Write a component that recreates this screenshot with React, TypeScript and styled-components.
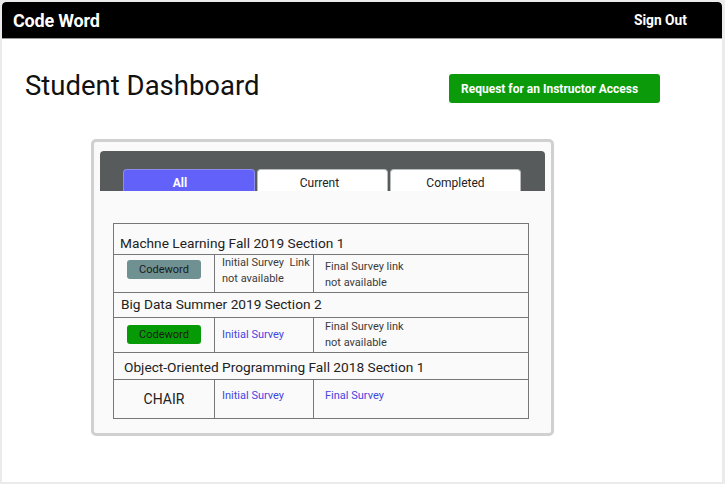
import React from "react";
import styled, { createGlobalStyle } from "styled-components";

const Global = createGlobalStyle`
  html, body { margin: 0; padding: 0; background: #ebebeb; }
  body { font-family: Roboto, "Liberation Sans", Arial, sans-serif; }
  * { box-sizing: border-box; }
`;

const Frame = styled.div`
  width: 725px;
  height: 484px;
  padding: 2px 3px 2px 2px;
  background: #ebebeb;
`;

const Page = styled.div`
  height: 100%;
  background: #ffffff;
  border-radius: 4px 4px 0 0;
  display: flex;
  flex-direction: column;
  overflow: hidden;
`;

const TopBar = styled.header`
  height: 37px;
  background: #000;
  border-radius: 4px 4px 0 0;
  border-bottom: 1px solid #9a9a9a;
  display: flex;
  align-items: center;
  justify-content: space-between;
  padding: 0 35px 0 11px;
  color: #fff;
`;

const Brand = styled.div`
  font-size: 18px;
  font-weight: 700;
  letter-spacing: -0.2px;
`;

const SignOut = styled.div`
  font-size: 13.8px;
  font-weight: 700;
`;

const TitleRow = styled.div`
  display: flex;
  align-items: flex-start;
  margin-top: 31px;
  padding: 0 62px 0 23px;
`;

const Title = styled.h1`
  margin: 0;
  font-size: 27.5px;
  line-height: 32px;
  font-weight: 400;
  color: #111;
`;

const AccessButton = styled.button`
  margin-left: auto;
  margin-top: 4px;
  width: 211px;
  height: 29px;
  border: none;
  border-radius: 3px;
  background: #0a9a0a;
  color: #fff;
  font-family: inherit;
  font-size: 12px;
  font-weight: 700;
  text-align: left;
  padding: 0 0 0 12px;
`;

const Card = styled.section`
  margin: 36px 0 0 89px;
  width: 463px;
  height: 297px;
  border: 3px solid #d0d0d0;
  border-radius: 5px;
  background: #fafafa;
  padding: 9px 6px 0 6px;
`;

const TabBar = styled.div`
  height: 40px;
  background: #575b5b;
  border-radius: 4px 4px 0 0;
  display: flex;
  align-items: flex-end;
  gap: 2px;
  padding-left: 23px;
`;

const Tab = styled.div<{ $active?: boolean; $pr: number }>`
  width: 131px;
  height: 22px;
  border: 1px solid ${(p) => (p.$active ? "#8c8cf0" : "#b8bcbc")};
  border-bottom: none;
  border-radius: 4px 4px 0 0;
  background: ${(p) => (p.$active ? "#6262fa" : "#ffffff")};
  color: ${(p) => (p.$active ? "#ffffff" : "#222")};
  font-size: 12px;
  font-weight: ${(p) => (p.$active ? 700 : 400)};
  display: flex;
  align-items: center;
  justify-content: center;
  padding: 4px ${(p) => p.$pr}px 0 0;
  &:first-child { width: 132px; }
`;

const Table = styled.div`
  margin: 32px 0 0 13px;
  width: 416px;
  border-top: 1px solid #777;
  border-left: 1px solid #777;
  border-right: 1px solid #777;
`;

const CourseTitle = styled.div<{ $h: number; $pl: number; $pt: number }>`
  height: ${(p) => p.$h}px;
  padding: ${(p) => p.$pt}px 0 0 ${(p) => p.$pl}px;
  border-bottom: 1px solid #777;
  font-size: 13.7px;
  color: #222;
  line-height: 16px;
  white-space: nowrap;
`;

const DataRow = styled.div<{ $h: number }>`
  height: ${(p) => p.$h}px;
  display: grid;
  grid-template-columns: 101px 99px 1fr;
  border-bottom: 1px solid #777;
`;

const Cell = styled.div<{ $pt?: number; $pl?: number; $center?: boolean; $middle?: boolean }>`
  border-right: 1px solid #777;
  &:last-child { border-right: none; }
  padding: ${(p) => p.$pt ?? 0}px 0 0 ${(p) => p.$pl ?? 0}px;
  display: flex;
  flex-direction: column;
  align-items: ${(p) => (p.$center ? "center" : "flex-start")};
  justify-content: ${(p) => (p.$middle ? "center" : "flex-start")};
  font-size: 11px;
  line-height: 16px;
  color: #3a3a3a;
`;

const CodeButton = styled.div<{ $bg: string }>`
  width: 74px;
  height: 19px;
  border-radius: 3px;
  background: ${(p) => p.$bg};
  color: #1a1a1a;
  font-size: 11px;
  display: flex;
  align-items: center;
  justify-content: center;
`;

const SurveyLink = styled.a`
  color: #4545e2;
  font-size: 11px;
  text-decoration: none;
`;

const ChairText = styled.div`
  font-size: 14px;
  color: #222;
`;

export default function App() {
  return (
    <>
      <Global />
      <Frame>
        <Page>
          <TopBar>
            <Brand>Code Word</Brand>
            <SignOut>Sign Out</SignOut>
          </TopBar>
          <TitleRow>
            <Title>Student Dashboard</Title>
            <AccessButton>Request for an Instructor Access</AccessButton>
          </TitleRow>
          <Card>
            <TabBar>
              <Tab $active $pr={18}>All</Tab>
              <Tab $pr={6}>Current</Tab>
              <Tab $pr={0}>Completed</Tab>
            </TabBar>
            <Table>
              <CourseTitle $h={31} $pl={6} $pt={11}>
                Machne Learning Fall 2019 Section 1
              </CourseTitle>
              <DataRow $h={38}>
                <Cell $center $pt={5}>
                  <CodeButton $bg="#6f9191">Codeword</CodeButton>
                </Cell>
                <Cell $pl={7} $pt={0}>
                  <span>Initial Survey&nbsp; Link</span>
                  <span>not available</span>
                </Cell>
                <Cell $pl={11} $pt={4}>
                  <span>Final Survey link</span>
                  <span>not available</span>
                </Cell>
              </DataRow>
              <CourseTitle $h={25} $pl={7} $pt={3}>
                Big Data Summer 2019 Section 2
              </CourseTitle>
              <DataRow $h={35}>
                <Cell $center $pt={7}>
                  <CodeButton $bg="#079a07">Codeword</CodeButton>
                </Cell>
                <Cell $pl={7} $middle>
                  <SurveyLink href="#">Initial Survey</SurveyLink>
                </Cell>
                <Cell $pl={11} $pt={1}>
                  <span>Final Survey link</span>
                  <span>not available</span>
                </Cell>
              </DataRow>
              <CourseTitle $h={27} $pl={10} $pt={6}>
                Object-Oriented Programming Fall 2018 Section 1
              </CourseTitle>
              <DataRow $h={39}>
                <Cell $center $middle>
                  <ChairText>CHAIR</ChairText>
                </Cell>
                <Cell $pl={7} $pt={8}>
                  <SurveyLink href="#">Initial Survey</SurveyLink>
                </Cell>
                <Cell $pl={11} $pt={8}>
                  <SurveyLink href="#">Final Survey</SurveyLink>
                </Cell>
              </DataRow>
            </Table>
          </Card>
        </Page>
      </Frame>
    </>
  );
}
